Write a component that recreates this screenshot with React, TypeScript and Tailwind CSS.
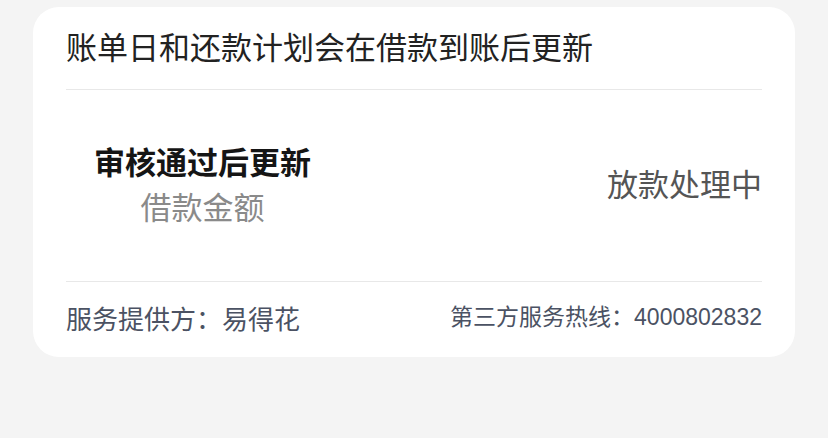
export default function App() {
  return (
    <div
      className="min-h-[438px] w-full bg-[#f4f4f4] pt-[7px] px-[33px]"
      style={{ fontFamily: '"Noto Sans CJK SC", "Noto Sans", sans-serif' }}
    >
      <div className="rounded-[26px] bg-white px-[33px]">
        {/* 标题 */}
        <div className="flex h-[82px] items-center pb-[3px] text-[31px] text-[#222]">
          账单日和还款计划会在借款到账后更新
        </div>
        <div className="h-px bg-[#e8e8e8]" />

        {/* 借款状态 */}
        <div className="flex h-[191px] items-center justify-between pb-[5px]">
          <div className="ml-[28px] flex flex-col items-center">
            <div className="text-[31px] font-bold leading-[45px] text-[#151515]">审核通过后更新</div>
            <div className="text-[31px] leading-[45px] text-[#8a8a8a]">借款金额</div>
          </div>
          <div className="text-[31px] leading-[46px] text-[#555]">放款处理中</div>
        </div>
        <div className="h-px bg-[#e8e8e8]" />

        {/* 底部信息 */}
        <div className="flex h-[75px] items-center justify-between pb-[4px] text-[#4b5263]">
          <div className="text-[26px]">服务提供方：易得花</div>
          <div
            className="text-[23px]"
            style={{ fontFamily: '"Liberation Sans", "Noto Sans CJK SC", sans-serif' }}
          >
            第三方服务热线：4000802832
          </div>
        </div>
      </div>
    </div>
  );
}
